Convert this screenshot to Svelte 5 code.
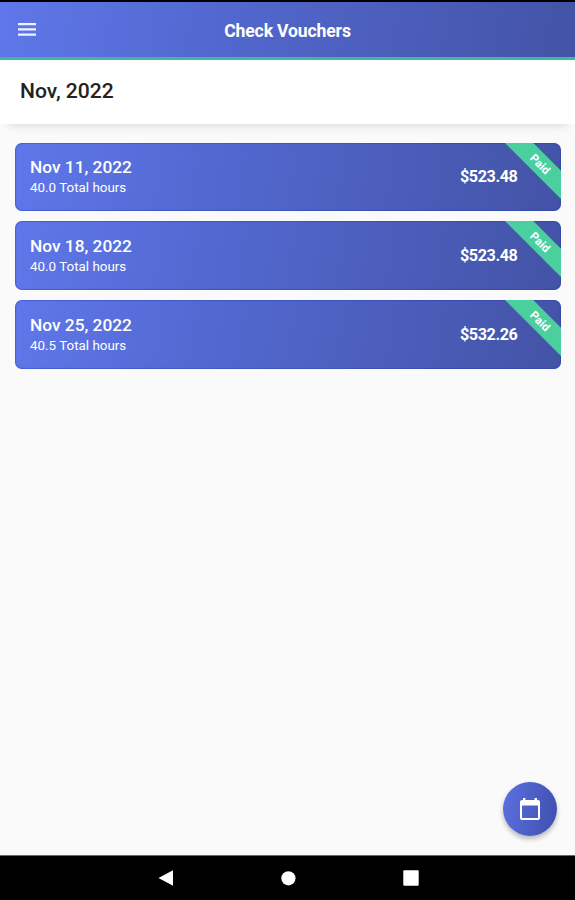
<script>
const vouchers = [
  { date: 'Nov 11, 2022', hours: '40.0', amount: '$523.48', paid: true },
  { date: 'Nov 18, 2022', hours: '40.0', amount: '$523.48', paid: true },
  { date: 'Nov 25, 2022', hours: '40.5', amount: '$532.26', paid: true },
]
</script>

<div class="screen">
  <header class="toolbar">
    <button class="menu" aria-label="Menu">
      <svg width="18" height="13" viewBox="0 0 18 13" fill="#f0f2ff">
        <path d="M0 0h18v2.3H0zM0 5.2h18v2.3H0zM0 10.4h18v2.3H0z" />
      </svg>
    </button>
    <h1>Check Vouchers</h1>
  </header>

  <div class="month">Nov, 2022</div>

  <main class="list">
    {#each vouchers as voucher (voucher.date)}
      <div class="voucher">
        <div class="info">
          <span class="date">{voucher.date}</span>
          <span class="hours">{voucher.hours} Total hours</span>
        </div>
        <span class="amount">{voucher.amount}</span>
        {#if voucher.paid}
          <span class="ribbon">Paid</span>
        {/if}
      </div>
    {/each}
  </main>

  <button class="fab" aria-label="Pick month">
    <svg width="20" height="22" viewBox="0 0 20 22">
      <path fill="#fff" fill-rule="evenodd" d="M3 0h2.4v2h9.2V0H17v2h1a2 2 0 0 1 2 2v16a2 2 0 0 1-2 2H2a2 2 0 0 1-2-2V4a2 2 0 0 1 2-2h1zM2 7.4V20h16V7.4z" />
    </svg>
  </button>

  <nav class="navbar">
    <svg width="16" height="16" viewBox="0 0 16 16" fill="#fff"><path d="M.5 8 15 .3v15.4z" /></svg>
    <svg width="16" height="16" viewBox="0 0 16 16" fill="#fff"><circle cx="8.4" cy="8.3" r="7.1" /></svg>
    <svg width="16" height="16" viewBox="0 0 16 16" fill="#fff"><rect x=".3" y=".3" width="15.4" height="15.4" rx="1" /></svg>
  </nav>
</div>

<style>
:global(body) {
  background: #fafafa;
}

.screen {
  --brand: linear-gradient(100deg, #5f77e9, #546ad3 32%, #4353a6);
  position: relative;
  display: flex;
  flex-direction: column;
  box-sizing: border-box;
  height: 900px;
  border-top: 2px solid #000;
  background: #fafafa;
  font-family: Roboto, sans-serif;
  overflow: hidden;
}

button {
  display: flex;
  padding: 0;
  border: 0;
  background: none;
  cursor: pointer;
}

.toolbar {
  display: grid;
  grid-template-columns: 40px 1fr 40px;
  align-items: center;
  box-sizing: border-box;
  height: 58px;
  padding: 0 18px;
  background: var(--brand);
  border-bottom: 3px solid #40b8a0;
}

h1 {
  margin: 2px 0 0;
  color: #fff;
  font-size: 17.6px;
  font-weight: 700;
  letter-spacing: -0.15px;
  line-height: 22px;
  text-align: center;
}

.month {
  box-sizing: border-box;
  height: 63.5px;
  padding: 18px 20px;
  background: #fff;
  box-shadow: 0 9px 9px -8px rgba(0, 0, 0, 0.15);
  color: #222;
  font-size: 21.1px;
  font-weight: 500;
  line-height: 25px;
}

.list {
  flex: 1;
  display: flex;
  flex-direction: column;
  gap: 10px;
  padding: 19.1px 14px 0 14.5px;
}

.voucher {
  position: relative;
  display: flex;
  align-items: center;
  justify-content: space-between;
  box-sizing: border-box;
  height: 68.7px;
  padding: 0 43.5px 0 15.5px;
  border-radius: 7px;
  background: var(--brand);
  box-shadow: inset 0 0 1px 1px rgba(35, 60, 185, 0.4);
  color: #fff;
  overflow: hidden;
}

.info {
  display: flex;
  flex-direction: column;
  margin-top: 1px;
}

.date {
  font-size: 17.3px;
  font-weight: 500;
  line-height: 21px;
}

.hours {
  font-size: 13.4px;
  line-height: 19px;
}

.amount {
  font-size: 16.2px;
  font-weight: 700;
  letter-spacing: -0.4px;
}

.ribbon {
  position: absolute;
  top: 11px;
  right: -29px;
  box-sizing: border-box;
  width: 100px;
  background: #4bcf9f;
  font-size: 11.5px;
  font-weight: 700;
  line-height: 20.4px;
  text-align: center;
  transform: rotate(45deg);
}

.fab {
  position: absolute;
  right: 18px;
  bottom: 64px;
  align-items: center;
  justify-content: center;
  width: 54px;
  height: 54px;
  border-radius: 50%;
  background: linear-gradient(100deg, #5c70e2, #3f4fae);
  box-shadow: 0 3px 5px rgba(0, 0, 0, 0.27);
}

.navbar {
  display: flex;
  align-items: center;
  justify-content: center;
  gap: 106.5px;
  box-sizing: border-box;
  height: 45px;
  padding-left: 1px;
  border-top: 1px solid #666;
  background: #000;
}
</style>
